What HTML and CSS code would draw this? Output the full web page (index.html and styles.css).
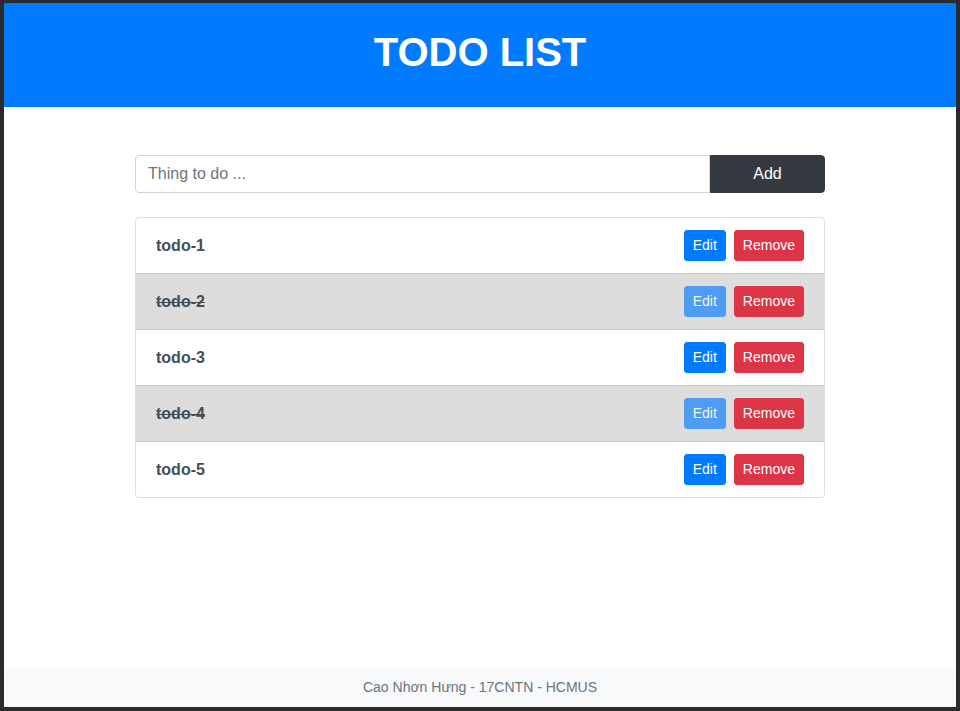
FILE: index.html
```html
<!DOCTYPE html>
<html>
<head>
<meta charset="utf-8">
<link rel="stylesheet" href="styles.css">
</head>
<body>
<div class="app">
  <header class="header"><h1 class="title">TODO LIST</h1></header>
  <main class="main">
    <div class="container">
      <form class="add-form">
        <input class="add-input" type="text" placeholder="Thing to do ...">
        <button class="add-btn" type="button">Add</button>
      </form>
      <ul class="list">
        <li class="item"><span class="item-text">todo-1</span><div class="actions"><button class="btn btn-edit">Edit</button><button class="btn btn-remove">Remove</button></div></li>
        <li class="item done"><span class="item-text">todo-2</span><div class="actions"><button class="btn btn-edit" disabled>Edit</button><button class="btn btn-remove">Remove</button></div></li>
        <li class="item"><span class="item-text">todo-3</span><div class="actions"><button class="btn btn-edit">Edit</button><button class="btn btn-remove">Remove</button></div></li>
        <li class="item done"><span class="item-text">todo-4</span><div class="actions"><button class="btn btn-edit" disabled>Edit</button><button class="btn btn-remove">Remove</button></div></li>
        <li class="item"><span class="item-text">todo-5</span><div class="actions"><button class="btn btn-edit">Edit</button><button class="btn btn-remove">Remove</button></div></li>
      </ul>
    </div>
  </main>
  <footer class="footer">Cao Nhơn Hưng - 17CNTN - HCMUS</footer>
</div>
</body>
</html>
```
FILE: styles.css
```css
* { box-sizing: border-box; }
html { background: #2b2b2b; height: 100%; }
body {
  margin: 3px 4px 4px 4px;
  height: 704px;
  background: #fff;
  font-family: "Liberation Sans", Arial, sans-serif;
  font-size: 16px;
  color: #212529;
}
.app { display: flex; flex-direction: column; height: 100%; }
.header {
  background: #007bff;
  height: 104px;
  display: flex;
  align-items: center;
  justify-content: center;
}
.title {
  margin: 0;
  color: #fff;
  font-size: 40px;
  font-weight: 700;
  line-height: 1;
  padding-bottom: 6px;
}
.main { flex: 1; padding-top: 48px; }
.container { width: 690px; margin: 0 auto; }
.add-form { display: flex; height: 38px; margin: 0 0 24px; }
.add-input {
  flex: 1;
  height: 38px;
  border: 1px solid #ced4da;
  border-radius: 4px 0 0 4px;
  padding: 6px 12px;
  font-family: inherit;
  font-size: 16px;
  color: #495057;
  outline: none;
}
.add-input::placeholder { color: #6c757d; }
.add-btn {
  width: 115px;
  height: 38px;
  border: 1px solid #343a40;
  background: #343a40;
  color: #fff;
  font-family: inherit;
  font-size: 16px;
  border-radius: 0 4px 4px 0;
}
.list {
  list-style: none;
  margin: 0;
  padding: 0;
  border: 1px solid rgba(0,0,0,.125);
  border-radius: 4px;
}
.item {
  display: flex;
  align-items: center;
  justify-content: space-between;
  height: 56px;
  padding: 0 20px;
  border-top: 1px solid #c8c8c8;
}
.item:first-child { border-top: none; height: 55px; }
.item.done { background: #dddddd; }
.item-text { font-weight: 700; color: #454d55; }
.item.done .item-text { text-decoration: line-through; }
.actions { display: flex; gap: 8px; }
.btn {
  height: 31px;
  padding: 0 8px 2px;
  border: 1px solid transparent;
  border-radius: 3px;
  font-family: inherit;
  font-size: 14px;
  color: #fff;
}
.btn-edit { background: #007bff; border-color: #007bff; }
.btn-edit:disabled { opacity: .65; }
.btn-remove { background: #dc3545; border-color: #dc3545; }
.footer {
  height: 40px;
  background: #f8f9fa;
  color: #6c757d;
  font-size: 14px;
  display: flex;
  align-items: center;
  justify-content: center;
}
```
